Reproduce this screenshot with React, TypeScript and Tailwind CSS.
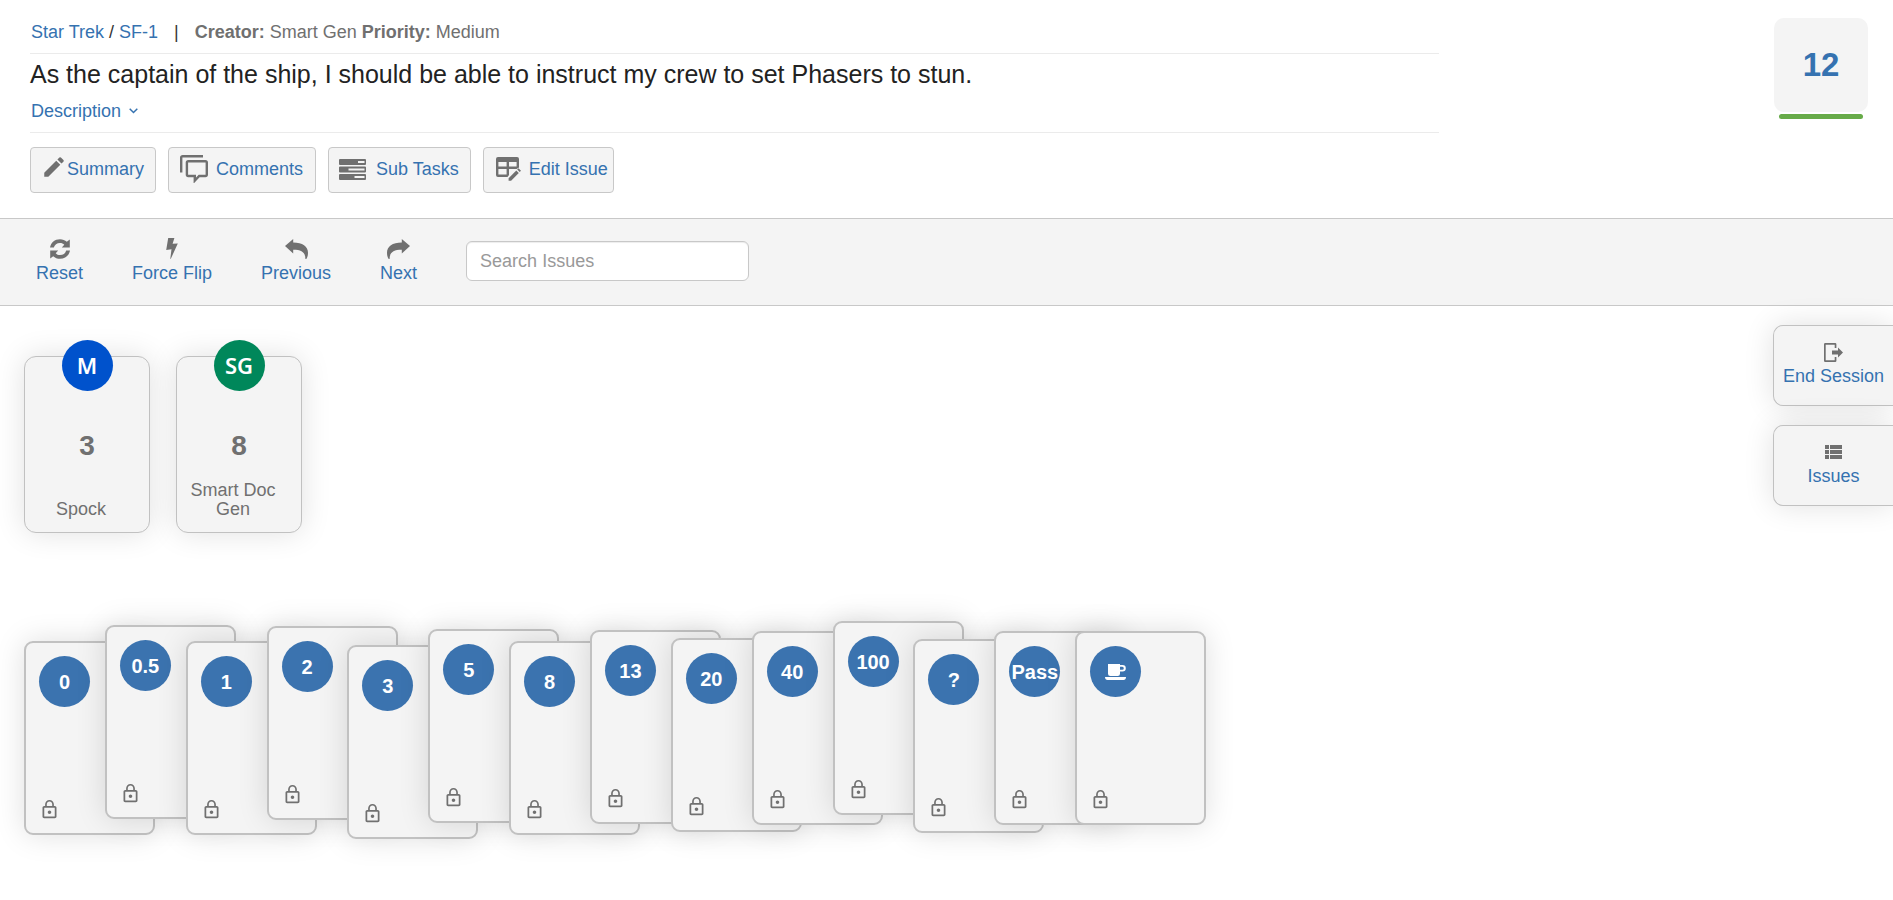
import type { ReactNode } from 'react';
import clsx from 'clsx';
import { MdEdit, MdLockOutline } from 'react-icons/md';

const players = [
  { initials: 'M', name: 'Spock', vote: '3', color: 'bg-[#0052cc]' },
  { initials: 'SG', name: 'Smart Doc Gen', vote: '8', color: 'bg-[#00875a]' },
];

// drop = how far a card hangs below the highest one in the hand
const hand = [
  { value: '0', drop: 20 },
  { value: '0.5', drop: 4 },
  { value: '1', drop: 20 },
  { value: '2', drop: 5 },
  { value: '3', drop: 24 },
  { value: '5', drop: 8 },
  { value: '8', drop: 20 },
  { value: '13', drop: 9 },
  { value: '20', drop: 17 },
  { value: '40', drop: 10 },
  { value: '100', drop: 0 },
  { value: '?', drop: 18 },
  { value: 'Pass', drop: 10 },
  { value: 'coffee', drop: 10 },
];

function CommentsIcon() {
  return (
    <svg width="28" height="28" viewBox="0 0 28 28" fill="none" stroke="currentColor" strokeWidth="2.4">
      <path d="M1.2 17.5V2.6a1.4 1.4 0 0 1 1.4-1.4H23" />
      <path d="M8.3 6.2h17.1a1.4 1.4 0 0 1 1.4 1.4v12a1.4 1.4 0 0 1-1.4 1.4h-6.2l-4.4 4.6V21H8.3a1.4 1.4 0 0 1-1.4-1.4v-12a1.4 1.4 0 0 1 1.4-1.4z" />
    </svg>
  );
}

function SubTasksIcon() {
  return (
    <svg width="27" height="21" viewBox="0 0 27 21" fill="currentColor" fillRule="evenodd">
      <path d="M1 0h25a1 1 0 0 1 1 1v4a1 1 0 0 1-1 1H1a1 1 0 0 1-1-1V1a1 1 0 0 1 1-1zM19 2v2h6.500V2z" />
      <path d="M1 7.500h25a1 1 0 0 1 1 1v4a1 1 0 0 1-1 1H1a1 1 0 0 1-1-1v-4a1 1 0 0 1 1-1zM9.500 9.500v2h16v-2z" />
      <path d="M1 15h25a1 1 0 0 1 1 1v4a1 1 0 0 1-1 1H1a1 1 0 0 1-1-1v-4a1 1 0 0 1 1-1zM15.500 17v2h10v-2z" />
    </svg>
  );
}

function EditIssueIcon() {
  return (
    <svg width="26" height="24" viewBox="0 0 26 24" fill="currentColor">
      <path
        fillRule="evenodd"
        d="M2 0h19a2 2 0 0 1 2 2v8.500L20.600 12H13v6l-1.500 2H2a2 2 0 0 1-2-2V2a2 2 0 0 1 2-2zM2.400 5v4.500h8.200V5zM13 5v4.500h7.600V5zM2.400 12v5.600h8.200V12z"
      />
      <path d="M12.600 21.200l7.700-7.800 2.500 2.500-7.700 7.800h-2.500zM21.200 12.500l1.300-1.300 2.500 2.500-1.300 1.300z" />
    </svg>
  );
}

function ResetIcon() {
  return (
    <svg width="20" height="20" viewBox="0 0 20 20" fill="currentColor">
      <path d="M0 8.600C.8 3.700 4.800.2 10 .2c2.700 0 5 .9 6.800 2.600L19.800.6v7.900h-8l2.500-2.700C13.200 4.500 11.800 3.900 10 3.900c-3.100 0-5.400 1.800-6.200 4.700z" />
      <path d="M20 11.400c-.8 4.900-4.800 8.400-10 8.400-2.700 0-5-.9-6.800-2.600L.2 19.400v-7.900h8l-2.500 2.700c1.100 1.300 2.500 1.900 4.300 1.900 3.100 0 5.400-1.800 6.200-4.700z" />
    </svg>
  );
}

function FlashIcon() {
  return (
    <svg width="12" height="21" viewBox="0 0 12 21" fill="currentColor">
      <path d="M2.200 0h6.200L6.600 5.800l5.200-.2L4.700 21l-.4-.2 1.200-9.500-5.300.6z" />
    </svg>
  );
}

function ArrowIcon({ flipped }: { flipped?: boolean }) {
  return (
    <svg width="23" height="20" viewBox="0 0 23 20" fill="currentColor" className={clsx(flipped && '-scale-x-100')}>
      <path d="M0 7l8.200-7v3.400C17.500 3.400 23 7.400 23 13.800c0 2.400-.6 4.600-1.700 6.200h-.9c.1-6.300-3.400-9.200-12.200-9.200V14.400z" />
    </svg>
  );
}

function ExitIcon() {
  return (
    <svg width="19" height="19" viewBox="0 0 19 19" fill="currentColor">
      <path d="M0 1.200A1.200 1.200 0 0 1 1.200 0h10a1.200 1.200 0 0 1 1.200 1.200V5h-1.700V1.700h-9v15.600h9V14h1.700v3.800a1.200 1.200 0 0 1-1.200 1.200h-10A1.200 1.200 0 0 1 0 17.800z" />
      <path d="M8 7.500h6V4.500l5 5-5 5v-3H8z" />
    </svg>
  );
}

function ListIcon() {
  return (
    <svg width="17" height="14" viewBox="0 0 17 14" fill="currentColor">
      <path d="M0 0h4v4H0zM5 0h12v4H5zM0 5h4v4H0zM5 5h12v4H5zM0 10h4v4H0zM5 10h12v4H5z" />
    </svg>
  );
}

function CoffeeIcon() {
  return (
    <svg width="21" height="16" viewBox="0 0 21 16" fill="currentColor" role="img" aria-label="Coffee break">
      <path
        fillRule="evenodd"
        d="M3 0h12v1h2.500a3.300 3.300 0 0 1 0 6.600H15v2.100a2.300 2.300 0 0 1-2.300 2.300H5.300A2.300 2.300 0 0 1 3 9.700zM15 2.800v3h2.300a1.500 1.500 0 0 0 0-3z"
      />
      <path d="M0 13h21c0 1.800-1 3-2.500 3h-16C1 16 0 14.800 0 13z" />
    </svg>
  );
}

function IssueButton({ icon, label, className }: { icon: ReactNode; label: string; className: string }) {
  return (
    <button
      className={clsx(
        'flex h-[46px] items-center rounded-[4px] border border-[#c8c8c8] bg-[#f4f4f4] pb-0.5 text-[#3572b0]',
        className,
      )}
    >
      <span className="text-[#707070]">{icon}</span>
      {label}
    </button>
  );
}

function ToolButton({ icon, label }: { icon: ReactNode; label: string }) {
  return (
    <button className="flex flex-col items-center text-[#3572b0]">
      <span className="flex h-6 items-end pb-0.5 text-[#707070]">{icon}</span>
      <span className="leading-6">{label}</span>
    </button>
  );
}

function SideButton({ icon, label }: { icon: ReactNode; label: string }) {
  return (
    <button className="flex h-[81px] w-[120px] flex-col items-center rounded-l-[10px] border border-r-0 border-[#c1c1c1] bg-[#f4f4f4] pt-[14px] text-[#3572b0] shadow-[0_0_30px_rgba(0,0,0,0.12)]">
      <span className="flex h-6 items-center text-[#707070]">{icon}</span>
      <span className="leading-6">{label}</span>
    </button>
  );
}

export default function App() {
  return (
    <div className="min-h-screen overflow-x-hidden bg-white font-['Liberation_Sans',Arial,sans-serif] text-[18px] leading-6 text-[#707070]">
      {/* Issue header */}
      <header className="flex items-start justify-between pr-[25px] pb-[25px] pl-[30px]">
        <div className="w-[77%] max-w-[1409px] pt-5">
          <div className="flex border-b border-[#ebebeb] pb-[9px] pl-px whitespace-pre">
            <a href="#project" className="text-[#3572b0]">Star Trek</a>
            <span className="text-[#333333]"> / </span>
            <a href="#issue" className="text-[#3572b0]">SF-1</a>
            <span className="mx-4 text-[#333333]">|</span>
            <span>
              <b>Creator:</b> Smart Gen <b>Priority:</b> Medium
            </span>
          </div>
          <div className="border-b border-[#ebebeb] pt-0.5 pb-[9px]">
            <h1 className="text-[25px] leading-9 text-[#222222]">
              As the captain of the ship, I should be able to instruct my crew to set Phasers to stun.
            </h1>
            <button className="mt-[7px] flex items-center gap-2 pl-px text-[#3572b0]">
              Description
              <svg width="9" height="6" viewBox="0 0 9 6" fill="none" stroke="currentColor" strokeWidth="1.5">
                <path d="M.7.8l3.800 3.700L8.300.8" />
              </svg>
            </button>
          </div>
          <div className="mt-[14px] flex gap-3">
            <IssueButton icon={<MdEdit size={26} className="-mt-1" />} label="Summary" className="pr-[11px] pl-[10px]" />
            <IssueButton icon={<CommentsIcon />} label="Comments" className="gap-2 pr-3 pl-[11px]" />
            <IssueButton icon={<SubTasksIcon />} label="Sub Tasks" className="gap-2.5 pr-[11px] pl-[10px]" />
            <IssueButton icon={<EditIssueIcon />} label="Edit Issue" className="gap-[7px] pr-[5px] pl-3" />
          </div>
        </div>
        <div className="flex flex-col items-center gap-[2px] pt-[18px]">
          <div className="flex size-[94px] items-center justify-center rounded-[10px] bg-[#f4f4f4] text-[33px] font-bold text-[#3572b0]">
            12
          </div>
          <div className="h-[5px] w-[84px] rounded-full bg-[#67ab49]" />
        </div>
      </header>

      {/* Session toolbar */}
      <nav className="flex h-[88px] items-center gap-[49px] border-y border-[#c8c8c8] bg-[#f4f4f4] pb-0.5 pl-[36px]">
        <ToolButton icon={<ResetIcon />} label="Reset" />
        <ToolButton icon={<FlashIcon />} label="Force Flip" />
        <ToolButton icon={<ArrowIcon />} label="Previous" />
        <ToolButton icon={<ArrowIcon flipped />} label="Next" />
        <input
          type="text"
          aria-label="Search Issues"
          placeholder="Search Issues"
          className="h-10 w-[283px] rounded-[6px] border border-[#c8c8c8] bg-white px-[13px] shadow-[inset_0_1px_1px_rgba(0,0,0,0.075)] placeholder:text-[#999999]"
        />
      </nav>

      <main className="flex items-start justify-between">
        <div className="pt-[50px] pb-10 pl-6">
          {/* Votes */}
          <div className="flex gap-[26px]">
            {players.map((player) => (
              <div
                key={player.name}
                className="flex h-[177px] w-[126px] flex-col items-center rounded-[12px] border border-[#c1c1c1] bg-[#f4f4f4] pb-[13px] shadow-[0_0_30px_rgba(0,0,0,0.12)]"
              >
                <div
                  className={clsx(
                    "-mt-[17px] flex size-[51px] shrink-0 items-center justify-center rounded-full pb-0.5 font-['Noto_Sans',sans-serif] text-[22px] font-semibold text-white",
                    player.color,
                  )}
                >
                  {player.initials}
                </div>
                <div className="mt-[39px] text-[28px] leading-8 font-bold">{player.vote}</div>
                <div className="mt-auto w-full pr-5 pl-2 text-center leading-[19px]">{player.name}</div>
              </div>
            ))}
          </div>

          {/* Hand of cards */}
          <div className="mt-[88px] grid w-[1132px] grid-cols-14">
            {hand.map((card) => (
              <button
                key={card.value}
                style={{ marginTop: card.drop }}
                className="flex h-[194px] w-[131px] flex-col items-start justify-between rounded-[9px] border-2 border-[#c1c1c1] bg-[#f4f4f4] p-[13px] shadow-[0_0_30px_rgba(0,0,0,0.13)]"
              >
                <span className="flex size-[51px] items-center justify-center rounded-full bg-[#3b73af] text-[20px] font-bold text-white">
                  {card.value === 'coffee' ? <CoffeeIcon /> : card.value}
                </span>
                <MdLockOutline size={21} />
              </button>
            ))}
          </div>
        </div>

        <aside className="flex flex-col gap-[19px] pt-[19px]">
          <SideButton icon={<ExitIcon />} label="End Session" />
          <SideButton icon={<ListIcon />} label="Issues" />
        </aside>
      </main>
    </div>
  );
}
